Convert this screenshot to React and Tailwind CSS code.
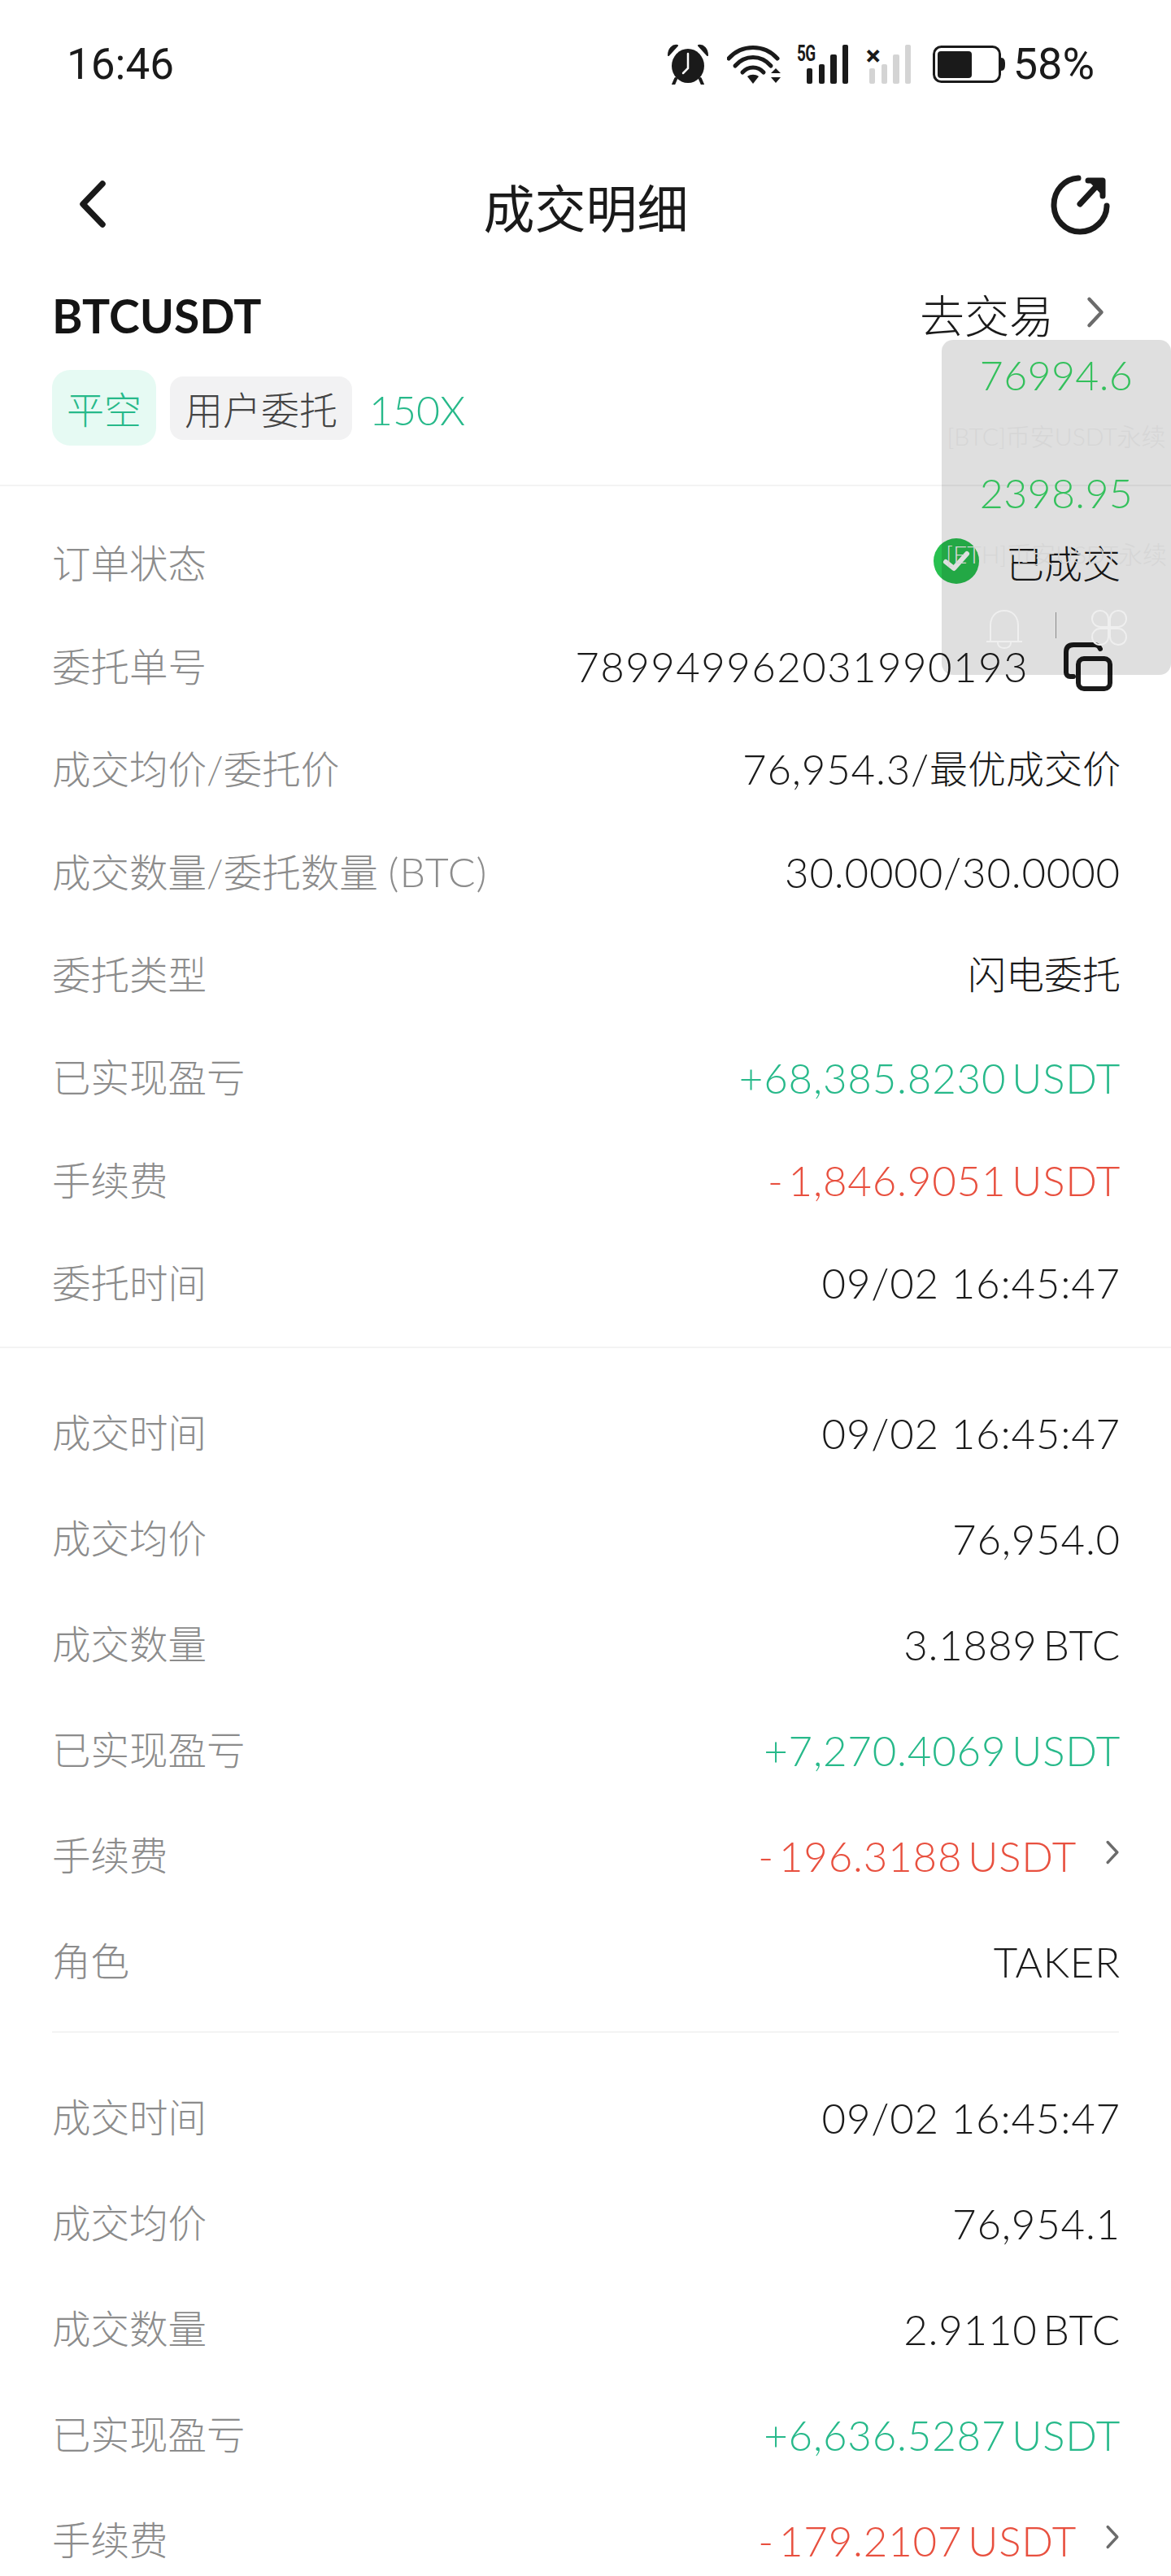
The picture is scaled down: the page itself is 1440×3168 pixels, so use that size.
const G = "text-[#27b98a]";
const R = "text-[#e8503f]";

function Chevron({ className }) {
  return (
    <svg className={className} viewBox="0 0 24 36" fill="none" stroke="#6b6b6b" strokeWidth="4" strokeLinecap="round" strokeLinejoin="round">
      <path d="M5 3 L19 18 L5 33" />
    </svg>
  );
}

function Money({ sign, num, unit = "USDT", color = "" }) {
  return (
    <span className={color}>
      {sign}{num}<span className="ml-[7px]">{unit}</span>
    </span>
  );
}

function Row({ label, h, children }) {
  return (
    <div className={`flex items-center justify-between pl-16 pr-[62px] ${h}`}>
      <span className="text-[47.5px] text-[#8c8c8c] leading-none">{label}</span>
      <div className="flex items-center text-[51px] tracking-[0.8px] text-[#1a1a1a] leading-none">{children}</div>
    </div>
  );
}

function Cn({ children }) {
  return <span className="text-[47px] tracking-normal">{children}</span>;
}

function Alarm() {
  return (
    <svg width="50" height="50" viewBox="0 0 50 50">
      <ellipse cx="25" cy="27" rx="20" ry="21" fill="#1a1a1a" />
      <path d="M1 14 C1 6 6 1 12 2 L1 14Z M49 14 C49 6 44 1 38 2 L49 14Z" fill="#1a1a1a" stroke="#1a1a1a" strokeWidth="2" strokeLinejoin="round" />
      <path d="M10 43 L7 50 M40 43 L43 50" stroke="#1a1a1a" strokeWidth="4" strokeLinecap="round" />
      <path d="M25 12 V30 L19 36" stroke="#fff" strokeWidth="2.5" fill="none" strokeLinecap="round" />
    </svg>
  );
}

function Wifi() {
  return (
    <svg width="67" height="48" viewBox="0 0 67 48" fill="none">
      <path d="M2 17 C18 -1 46 -1 62 17" stroke="#1a1a1a" strokeWidth="5" strokeLinecap="round" />
      <path d="M10 26 C22 12 42 12 54 26" stroke="#1a1a1a" strokeWidth="5" strokeLinecap="round" />
      <path d="M19 34 C26 26 38 26 45 34" stroke="#1a1a1a" strokeWidth="5" strokeLinecap="round" />
      <path d="M25 39 C29 36 35 36 39 39 L32 48 Z" fill="#1a1a1a" />
      <path d="M54 35 L60 29 L66 35 Z M54 40 H66 L60 47 Z" fill="#1a1a1a" />
    </svg>
  );
}

function Bars({ color }) {
  return (
    <svg width="52" height="48" viewBox="0 0 52 48" fill={color}>
      <rect x="0" y="29" width="7" height="19" rx="2" />
      <rect x="15" y="24" width="7" height="24" rx="2" />
      <rect x="29" y="12" width="8" height="36" rx="2" />
      <rect x="44" y="0" width="7" height="48" rx="2" />
    </svg>
  );
}

function Battery() {
  return (
    <svg width="90" height="46" viewBox="0 0 90 46">
      <rect x="1.5" y="1.5" width="81" height="43" rx="9" fill="none" stroke="#1a1a1a" strokeWidth="3" />
      <rect x="6" y="7" width="42" height="33" rx="4" fill="#1a1a1a" />
      <path d="M84 15 C88 15 89 18 89 23 C89 28 88 31 84 31 Z" fill="#1a1a1a" />
    </svg>
  );
}

function StatusBar() {
  return (
    <div className="h-[160px] flex items-center justify-between pl-[82px] pr-[94px] pb-[2px] font-['Roboto','Liberation_Sans',sans-serif] font-normal text-[#1a1a1a]">
      <span className="text-[53px] leading-none">16:46</span>
      <div className="flex items-center">
        <Alarm />
        <div className="ml-[23px]"><Wifi /></div>
        <div className="ml-[19px] relative w-[64px] h-[48px] flex justify-end">
          <Bars color="#1a1a1a" />
          <span className="absolute left-0 -top-[2px] text-[27px] font-bold leading-none tracking-[-1px] scale-x-[0.7] origin-left">5G</span>
        </div>
        <div className="ml-[23px] relative w-[54px] h-[48px] flex justify-end">
          <Bars color="#d4d4d4" />
          <span className="absolute -left-[2px] -top-[4px] text-[34px] font-bold leading-none text-[#1a1a1a]">×</span>
        </div>
        <div className="ml-[26px]"><Battery /></div>
        <span className="ml-[9px] text-[54px] leading-none">58%</span>
      </div>
    </div>
  );
}

function Nav() {
  return (
    <div className="h-[190px] flex items-center justify-between pl-[97px] pr-[74px]">
      <div className="w-[52px] -mt-[8px]">
        <svg width="34" height="58" viewBox="0 0 34 58" fill="none" stroke="#1a1a1a" strokeWidth="7.5" strokeLinecap="round" strokeLinejoin="round">
          <path d="M29 4 L5 29 L29 54" />
        </svg>
      </div>
      <span className="text-[63px] font-normal text-[#1a1a1a] leading-none">成交明细</span>
      <div className="-mt-[6px]">
        <svg width="74" height="74" viewBox="0 0 74 74" fill="none" stroke="#1a1a1a" strokeWidth="7" strokeLinecap="round" strokeLinejoin="round">
          <path d="M34 4 C17 5 4 19 4 37 C4 55 18 70 36 70 C54 70 69 55 69 38" />
          <path d="M36 36 L62 8" />
          <path d="M46 7 H64 V26" fill="#1a1a1a" />
        </svg>
      </div>
    </div>
  );
}

function Header() {
  return (
    <div className="h-[248px] border-b-2 border-[#f3f3f3]">
      <div className="flex items-center justify-between pl-16 pr-[80px] h-[76px]">
        <span className="text-[57px] font-bold leading-none text-[#141414]">BTCUSDT</span>
        <div className="flex items-center">
          <span className="text-[55px] leading-none text-[#1a1a1a]">去交易</span>
          <Chevron className="ml-[38px] w-[26px] h-[40px] -mt-[8px]" />
        </div>
      </div>
      <div className="flex items-center pl-16 mt-[29px]">
        <span className="w-[128px] h-[93px] rounded-[22px] bg-[#e6faf3] flex items-center justify-center pt-[4px] text-[46px] leading-none text-[#27b98a]">平空</span>
        <span className="ml-[17px] w-[224px] h-[78px] rounded-[16px] bg-[#f2f2f3] flex items-center justify-center pt-[5px] text-[47px] leading-none text-[#444]">用户委托</span>
        <span className="ml-[21px] pt-[5px] text-[50px] leading-none text-[#27b98a]">150X</span>
      </div>
    </div>
  );
}

function Copy() {
  return (
    <svg className="ml-[43px] mr-[10px]" width="60" height="60" viewBox="0 0 60 60" fill="none" stroke="#1a1a1a" strokeWidth="6" strokeLinecap="round" strokeLinejoin="round">
      <path d="M12 42 H8 C5 42 3 40 3 37 V12 C3 6 6 3 12 3 H38 C41 3 44 5 45 8" />
      <rect x="18" y="20" width="39" height="37" rx="7" />
    </svg>
  );
}

function Check() {
  return (
    <svg width="56" height="56" viewBox="0 0 56 56" className="mr-[33px] -mt-[6px]">
      <circle cx="28" cy="28" r="28" fill="#28c04f" />
      <path d="M15 29 L25 37 L41 19" fill="none" stroke="#fff" strokeWidth="6" strokeLinecap="round" strokeLinejoin="round" />
    </svg>
  );
}

function Trade({ time, avg, qty, pnl, fee, arrow, children }) {
  const h = "h-[130px]";
  return (
    <div>
      <Row label="成交时间" h={h}>{time}</Row>
      <Row label="成交均价" h={h}>{avg}</Row>
      <Row label="成交数量" h={h}>{qty}<span className="ml-[7px]">BTC</span></Row>
      <Row label="已实现盈亏" h={h}><Money sign="+" num={pnl} color={G} /></Row>
      <Row label="手续费" h={h}>
        <Money sign={<span className="mr-[6px]">-</span>} num={fee} color={R} />
        {arrow && <Chevron className="ml-[34px] w-[20px] h-[32px] -mt-[8px]" />}
      </Row>
      {children}
    </div>
  );
}

function Floating() {
  return (
    <div className="absolute left-[1158px] top-[418px] w-[282px] h-[412px] rounded-[14px] bg-black/[0.125] flex flex-col items-center">
      <span className="mt-[14px] text-[50px] tracking-[0.4px] leading-[58px] text-[#34c05c]">76994.6</span>
      <span className="mt-[24px] text-[30px] leading-[44px] whitespace-nowrap text-[#d6d6d6]">[BTC]币安USDT永续</span>
      <span className="mt-[19px] text-[50px] tracking-[0.4px] leading-[58px] text-[#34c05c]">2398.95</span>
      <span className="mt-[24px] text-[30px] leading-[44px] whitespace-nowrap text-[#d6d6d6]">[ETH]币安USDT永续</span>
      <div className="mt-[46px] flex items-start">
        <svg width="46" height="50" viewBox="0 0 46 50" fill="none" stroke="#efefef" strokeWidth="2">
          <path d="M6 40 V20 C6 9 13 2 23 2 C33 2 40 9 40 20 V40" />
          <path d="M1 40 H45" />
          <path d="M15 41 C15 46 19 48 23 48 C27 48 31 46 31 41" />
        </svg>
        <div className="ml-[40px] mt-[4px] w-[1px] h-[32px] bg-[#8a8a8a]" />
        <svg className="ml-[42px]" width="46" height="46" viewBox="0 0 46 46" fill="none" stroke="#efefef" strokeWidth="2">
          <path d="M22 22 H12 C6 22 2 17 2 12 C2 6 6 2 12 2 C17 2 22 6 22 12 Z" />
          <path d="M24 22 H34 C40 22 44 17 44 12 C44 6 40 2 34 2 C29 2 24 6 24 12 Z" />
          <path d="M22 24 H12 C6 24 2 29 2 34 C2 40 6 44 12 44 C17 44 22 40 22 34 Z" />
          <path d="M24 24 H34 C40 24 44 29 44 34 C44 40 40 44 34 44 C29 44 24 40 24 34 Z" />
        </svg>
      </div>
    </div>
  );
}

export default function App() {
  const h1 = "h-[126.4px]";
  return (
    <div className="relative w-[1440px] h-[3168px] overflow-hidden bg-white font-['Lato','Noto_Sans_CJK_SC',sans-serif] font-light">
      <StatusBar />
      <Nav />
      <Header />
      <div className="pt-[32px] pb-[15px] border-b-2 border-[#f3f3f3]">
        <Row label="订单状态" h={h1}><Check /><Cn>已成交</Cn></Row>
        <Row label="委托单号" h={h1}><span className="tracking-[1.4px]">789949962031990193</span><Copy /></Row>
        <Row label="成交均价/委托价" h={h1}>76,954.3/<Cn>最优成交价</Cn></Row>
        <Row label={<>成交数量/委托数量 <span className="text-[50px] tracking-[1px]">(BTC)</span></>} h={h1}>30.0000/30.0000</Row>
        <Row label="委托类型" h={h1}><Cn>闪电委托</Cn></Row>
        <Row label="已实现盈亏" h={h1}><Money sign="+" num="68,385.8230" color={G} /></Row>
        <Row label="手续费" h={h1}><Money sign={<span className="mr-[6px]">-</span>} num="1,846.9051" color={R} /></Row>
        <Row label="委托时间" h={h1}>09/02 16:45:47</Row>
      </div>
      <div className="pt-[39px]">
        <Trade time="09/02 16:45:47" avg="76,954.0" qty="3.1889" pnl="7,270.4069" fee="196.3188" arrow>
          <Row label="角色" h="h-[130px]">TAKER</Row>
        </Trade>
        <div className="mx-16 mt-[21px] mb-[39px] h-[2px] bg-[#f3f3f3]" />
        <Trade time="09/02 16:45:47" avg="76,954.1" qty="2.9110" pnl="6,636.5287" fee="179.2107" arrow />
      </div>
      <Floating />
    </div>
  );
}
